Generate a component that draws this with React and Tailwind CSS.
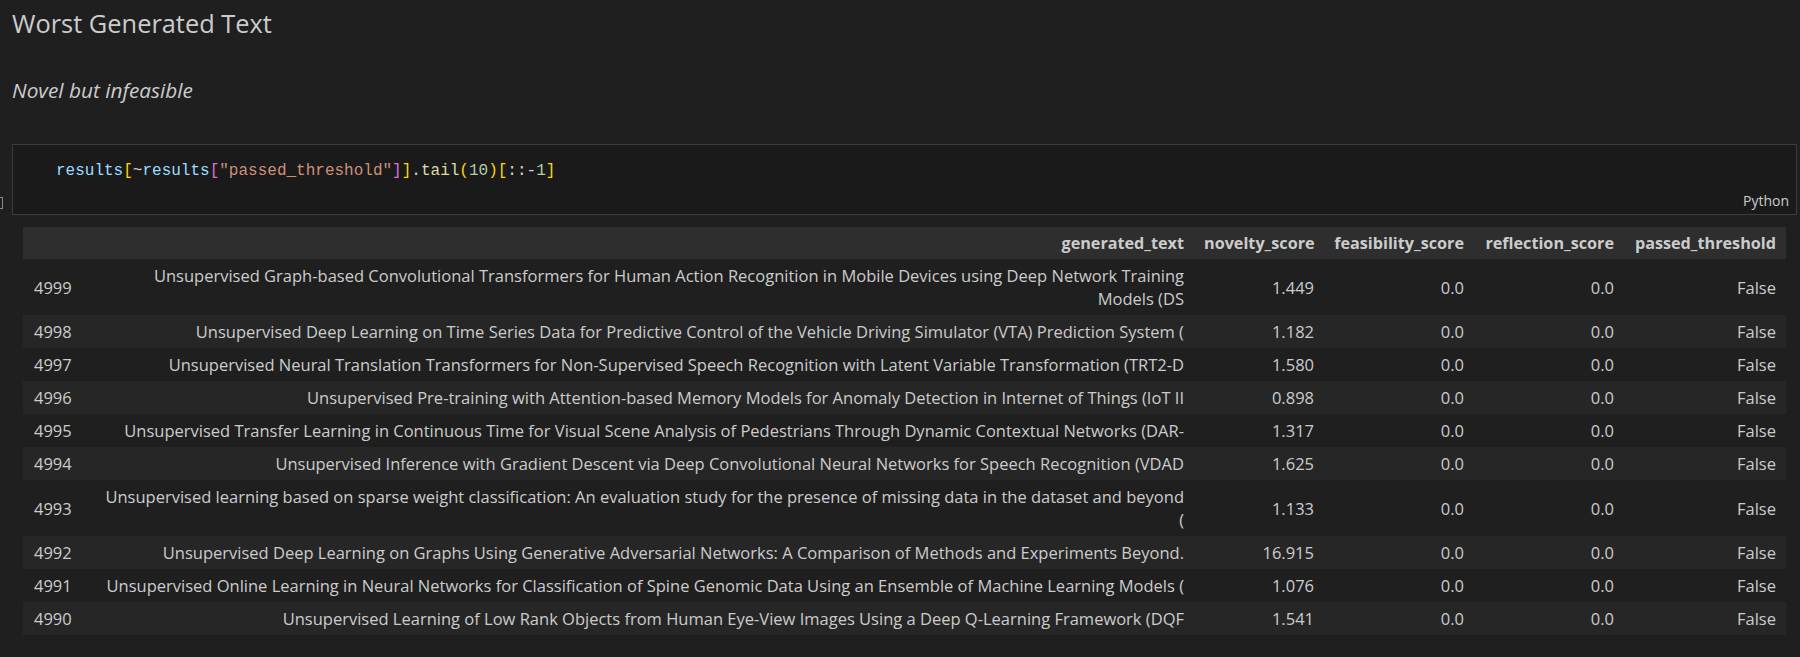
const rows = [
  ['4999', ['Unsupervised Graph-based Convolutional Transformers for Human Action Recognition in Mobile Devices using Deep Network Training', 'Models (DS'], '1.449'],
  ['4998', ['Unsupervised Deep Learning on Time Series Data for Predictive Control of the Vehicle Driving Simulator (VTA) Prediction System ('], '1.182'],
  ['4997', ['Unsupervised Neural Translation Transformers for Non-Supervised Speech Recognition with Latent Variable Transformation (TRT2-D'], '1.580'],
  ['4996', ['Unsupervised Pre-training with Attention-based Memory Models for Anomaly Detection in Internet of Things (IoT II'], '0.898'],
  ['4995', ['Unsupervised Transfer Learning in Continuous Time for Visual Scene Analysis of Pedestrians Through Dynamic Contextual Networks (DAR-'], '1.317'],
  ['4994', ['Unsupervised Inference with Gradient Descent via Deep Convolutional Neural Networks for Speech Recognition (VDAD'], '1.625'],
  ['4993', ['Unsupervised learning based on sparse weight classification: An evaluation study for the presence of missing data in the dataset and beyond', '('], '1.133'],
  ['4992', ['Unsupervised Deep Learning on Graphs Using Generative Adversarial Networks: A Comparison of Methods and Experiments Beyond.'], '16.915'],
  ['4991', ['Unsupervised Online Learning in Neural Networks for Classification of Spine Genomic Data Using an Ensemble of Machine Learning Models ('], '1.076'],
  ['4990', ['Unsupervised Learning of Low Rank Objects from Human Eye-View Images Using a Deep Q-Learning Framework (DQF'], '1.541'],
]

const headers = ['generated_text', 'novelty_score', 'feasibility_score', 'reflection_score', 'passed_threshold']

function CodeLine() {
  return (
    <div className="font-['Liberation_Mono',monospace] text-[16px] leading-[22px] text-[#d4d4d4] whitespace-pre">
      <span className="text-[#9cdcfe]">results</span>
      <span className="text-[#ffd700]">[</span>
      <span>~</span>
      <span className="text-[#9cdcfe]">results</span>
      <span className="text-[#da70d6]">[</span>
      <span className="text-[#ce9178]">"passed_threshold"</span>
      <span className="text-[#da70d6]">]</span>
      <span className="text-[#ffd700]">]</span>
      <span>.</span>
      <span className="text-[#dcdcaa]">tail</span>
      <span className="text-[#ffd700]">(</span>
      <span className="text-[#b5cea8]">10</span>
      <span className="text-[#ffd700]">)</span>
      <span className="text-[#ffd700]">[</span>
      <span>::-</span>
      <span className="text-[#b5cea8]">1</span>
      <span className="text-[#ffd700]">]</span>
    </div>
  )
}

export default function App() {
  return (
    <div className="min-h-screen w-full bg-[#1f1f1f] text-[#cccccc] font-['Open_Sans',sans-serif] overflow-hidden">
      {/* Markdown cell */}
      <div className="pl-[12px] pt-[6px]">
        <h2 className="text-[25.4px] leading-[34px] font-normal text-[#cccccc] font-stretch-[96%]">Worst Generated Text</h2>
        <p className="mt-[37px] text-[20.8px] leading-[27px] italic text-[#cccccc]">Novel but infeasible</p>
      </div>

      {/* Code cell */}
      <div className="flex items-end mt-[40px]">
        <div className="w-[3px] h-[12px] mb-[6px] border-y border-r border-[#8a8a8a] shrink-0" />
        <div className="ml-[9px] mr-[3px] flex-1 bg-[#1a1a1a] border border-[#3c3c3c] h-[71px] flex flex-col">
          <div className="pt-[15px] pl-[43px]">
            <CodeLine />
          </div>
          <div className="mt-auto flex justify-end pr-[7px] pb-[5px]">
            <span className="text-[14px] leading-[16px] text-[#cccccc] font-stretch-[96%]">Python</span>
          </div>
        </div>
      </div>

      {/* Output table */}
      <div className="pl-[23px] pt-[12px]">
        <table className="table-fixed border-collapse w-[1763px] text-[16.5px] leading-[23px]">
          <colgroup>
            <col className="w-[58px]" />
            <col className="w-[1113px]" />
            <col className="w-[130px]" />
            <col className="w-[150px]" />
            <col className="w-[150px]" />
            <col className="w-[162px]" />
          </colgroup>
          <thead>
            <tr className="bg-[#2e2e2e] h-[32px]">
              <th className="px-[10px]" />
              {headers.map((h) => (
                <th key={h} className="px-[10px] text-right text-[16.2px] font-bold whitespace-nowrap">
                  {h}
                </th>
              ))}
            </tr>
          </thead>
          <tbody>
            {rows.map(([idx, text, score], i) => (
              <tr key={idx} className={i % 2 === 1 ? 'bg-[#262626]' : ''}>
                <td className="pl-[11px] pr-[10px] py-[5px] text-left align-middle">{idx}</td>
                <td className="px-[10px] py-[5px] text-right align-middle whitespace-nowrap">
                  {text.map((line, j) => (
                    <div key={j}>{line}</div>
                  ))}
                </td>
                <td className="px-[10px] py-[5px] text-right align-middle">{score}</td>
                <td className="px-[10px] py-[5px] text-right align-middle">0.0</td>
                <td className="px-[10px] py-[5px] text-right align-middle">0.0</td>
                <td className="px-[10px] py-[5px] text-right align-middle">False</td>
              </tr>
            ))}
          </tbody>
        </table>
      </div>
    </div>
  )
}
